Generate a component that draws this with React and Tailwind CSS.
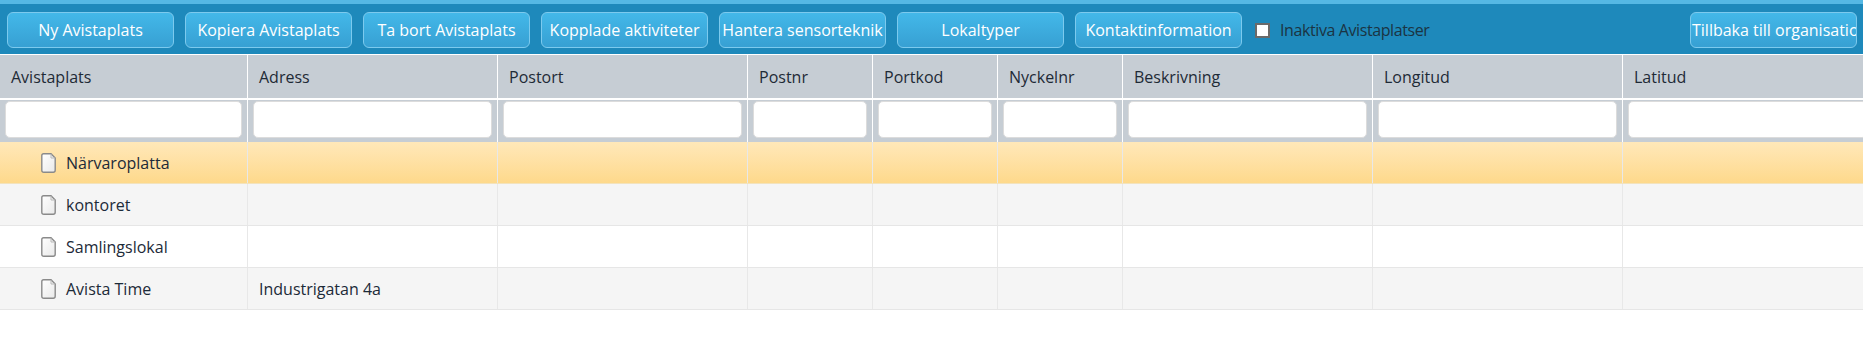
import React from "react";

const buttons = [
  "Ny Avistaplats",
  "Kopiera Avistaplats",
  "Ta bort Avistaplats",
  "Kopplade aktiviteter",
  "Hantera sensorteknik",
  "Lokaltyper",
  "Kontaktinformation",
];

const cols = [
  { name: "Avistaplats", w: "w-[248px]" },
  { name: "Adress", w: "w-[250px]" },
  { name: "Postort", w: "w-[250px]" },
  { name: "Postnr", w: "w-[125px]" },
  { name: "Portkod", w: "w-[125px]" },
  { name: "Nyckelnr", w: "w-[125px]" },
  { name: "Beskrivning", w: "w-[250px]" },
  { name: "Longitud", w: "w-[250px]" },
  { name: "Latitud", w: "w-[250px]" },
];

const rows = [
  { name: "Närvaroplatta", adress: "", bg: "bg-gradient-to-b from-[#ffe8b9] to-[#fed98b]", border: "border-[#f3e3bd]" },
  { name: "kontoret", adress: "", bg: "bg-[#f5f5f5]", border: "border-[#e6e6e6]" },
  { name: "Samlingslokal", adress: "", bg: "bg-white", border: "border-[#e6e6e6]" },
  { name: "Avista Time", adress: "Industrigatan 4a", bg: "bg-[#f5f5f5]", border: "border-[#e6e6e6]" },
];

function DocIcon() {
  return (
    <svg width="15" height="20" viewBox="0 0 15 20" className="shrink-0">
      <defs>
        <linearGradient id="dg" x1="0" y1="0" x2="1" y2="1">
          <stop offset="0" stopColor="#ffffff" />
          <stop offset="1" stopColor="#e9e9e9" />
        </linearGradient>
      </defs>
      <path
        d="M2.6 0.8 H10 L14.2 5 V17.2 Q14.2 19.2 12.2 19.2 H2.8 Q0.8 19.2 0.8 17.2 V2.8 Q0.8 0.8 2.6 0.8 Z"
        fill="url(#dg)"
        stroke="#8a8a8a"
        strokeWidth="1.4"
      />
      <path d="M10 1 V5 H14" fill="none" stroke="#b8b8b8" strokeWidth="1" />
    </svg>
  );
}

function ToolButton({ label, left }) {
  return (
    <button
      className={
        "h-[36px] w-[167px] shrink-0 overflow-hidden whitespace-nowrap rounded-[6px] border border-[#7ccaee] bg-gradient-to-b from-[#43b8e9] to-[#37a0d3] text-[16px] leading-none text-white " +
        (left ? "text-left pl-[1px]" : "text-center")
      }
    >
      {label}
    </button>
  );
}

export default function App() {
  return (
    <div className="h-[355px] w-[1863px] overflow-hidden bg-white font-['Open_Sans',sans-serif]">
      {/* Toolbar */}
      <div className="flex h-[54px] items-start gap-[11px] border-t-4 border-[#55b8e4] bg-[#1e89bb] pl-[7px] pr-[6px] pt-[8px]">
        {buttons.map((b) => (
          <ToolButton key={b} label={b} />
        ))}
        <label className="ml-[2px] flex h-[36px] items-center gap-[10px] text-[16px] tracking-[-0.4px] text-[#1b3443]">
          <span className="block h-[15px] w-[15px] border-2 border-[#6a6a6a] bg-white" />
          Inaktiva Avistaplatser
        </label>
        <div className="ml-auto">
          <ToolButton label="Tillbaka till organisation" left />
        </div>
      </div>

      {/* Header */}
      <div className="flex h-[44px] w-max border-t border-white bg-[#c6cdd4]">
        {cols.map((c) => (
          <div
            key={c.name}
            className={c.w + " flex shrink-0 items-center border-r border-white pl-[11px] text-[16px] text-[#1e2a36]"}
          >
            {c.name}
          </div>
        ))}
      </div>

      {/* Filter row */}
      <div className="flex h-[44px] w-max border-t-2 border-white bg-[#c6cdd4]">
        {cols.map((c) => (
          <div key={c.name} className={c.w + " shrink-0 border-r border-white px-[5px] pt-[1px]"}>
            <div className="h-[37px] rounded-[5px] border border-[#dcdcdc] bg-white" />
          </div>
        ))}
      </div>

      {/* Body rows */}
      {rows.map((r) => (
        <div key={r.name} className={"flex h-[42px] w-max border-b " + r.border + " " + r.bg}>
          {cols.map((c, i) => (
            <div
              key={c.name}
              className={c.w + " flex shrink-0 items-center border-r border-[#e8e8e8] text-[16px] text-[#1c2a38] " + (i === 0 ? "gap-[10px] pl-[41px]" : "pl-[11px]")}
            >
              {i === 0 && (
                <>
                  <DocIcon />
                  <span>{r.name}</span>
                </>
              )}
              {i === 1 && r.adress}
            </div>
          ))}
        </div>
      ))}
    </div>
  );
}
